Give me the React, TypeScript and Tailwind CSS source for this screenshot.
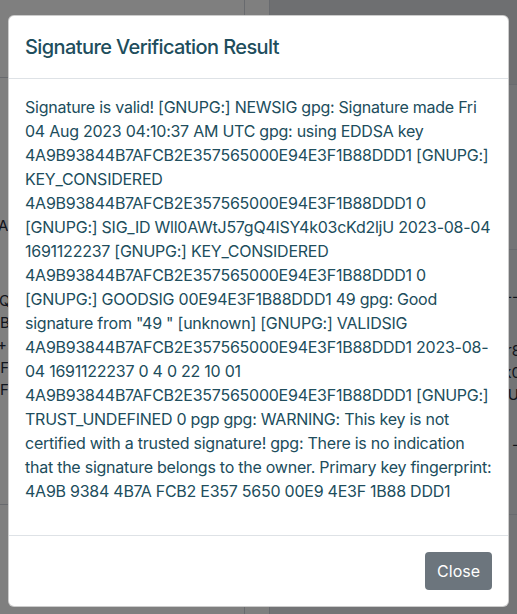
import React from "react";

const lines = [
  "Signature is valid! [GNUPG:] NEWSIG gpg: Signature made Fri",
  "04 Aug 2023 04:10:37 AM UTC gpg: using EDDSA key",
  "4A9B93844B7AFCB2E357565000E94E3F1B88DDD1 [GNUPG:]",
  "KEY_CONSIDERED",
  "4A9B93844B7AFCB2E357565000E94E3F1B88DDD1 0",
  "[GNUPG:] SIG_ID Wll0AWtJ57gQ4ISY4k03cKd2ljU 2023-08-04",
  "1691122237 [GNUPG:] KEY_CONSIDERED",
  "4A9B93844B7AFCB2E357565000E94E3F1B88DDD1 0",
  "[GNUPG:] GOODSIG 00E94E3F1B88DDD1 49 gpg: Good",
  'signature from "49 " [unknown] [GNUPG:] VALIDSIG',
  "4A9B93844B7AFCB2E357565000E94E3F1B88DDD1 2023-08-",
  "04 1691122237 0 4 0 22 10 01",
  "4A9B93844B7AFCB2E357565000E94E3F1B88DDD1 [GNUPG:]",
  "TRUST_UNDEFINED 0 pgp gpg: WARNING: This key is not",
  "certified with a trusted signature! gpg: There is no indication",
  "that the signature belongs to the owner. Primary key fingerprint:",
  "4A9B 9384 4B7A FCB2 E357 5650 00E9 4E3F 1B88 DDD1",
];

function BackgroundPage() {
  return (
    <div className="flex h-full w-full text-[15px] text-gray-800">
      <div className="flex w-[270px] border-r border-gray-300 bg-white">
        <div className="flex w-[245px] flex-col border-r border-gray-300">
          <div className="h-[78px] border-b border-gray-300" />
          <div className="flex flex-1 flex-col">
            <div className="h-[137px]" />
            <div className="-ml-[2px] leading-[22px]">A</div>
            <div className="h-[53px]" />
            <div className="-ml-[1px] leading-[22px]">Q</div>
            <div className="leading-[22px]">B</div>
            <div className="-ml-[3px] leading-[23px]">+5</div>
            <div className="-ml-[4px] leading-[22px]">:F</div>
            <div className="leading-[22px]">F</div>
          </div>
          <div className="h-[110px] border-t border-gray-300" />
        </div>
      </div>
      <div className="flex flex-1 flex-col bg-[#e6e8ec]">
        <div className="h-[85px] border-b border-gray-300 bg-[#dcdee3]" />
        <div className="h-[165px] border-b border-gray-300" />
        <div className="flex flex-1 flex-col items-end">
          <div className="h-[36px]" />
          <div className="-mr-[2px] leading-[22px]">--</div>
          <div className="h-[32px]" />
          <div className="-mr-[4px] leading-[22px]">r8</div>
          <div className="-mr-[4px] leading-[22px]">k0</div>
          <div className="-mr-[2px] leading-[22px]">U</div>
          <div className="h-[28px]" />
          <div className="-mr-[2px] leading-[22px]">-</div>
        </div>
        <div className="h-[100px] border-t border-gray-300" />
      </div>
    </div>
  );
}

export default function App() {
  return (
    <div className="relative h-[614px] w-[517px] overflow-hidden font-['Inter','Liberation_Sans',sans-serif]">
      <BackgroundPage />
      <div className="absolute inset-0 bg-black/50" />
      <div className="absolute left-[8px] right-[8px] top-[15px] flex flex-col rounded-[6px] border border-black/20 bg-white text-[#204d5c]">
        <div className="flex items-center border-b border-[#dee2e6] p-4">
          <h5 className="text-[20px] font-medium leading-[30px] tracking-[-0.6px]">
            Signature Verification Result
          </h5>
        </div>
        <div className="p-4">
          <p className="mb-4 text-[16px] leading-[24px] tracking-[-0.25px]">
            {lines.map((l, i) => (
              <span key={i} className="block whitespace-nowrap">
                {l}
              </span>
            ))}
          </p>
        </div>
        <div className="flex justify-end border-t border-[#dee2e6] p-3">
          <button className="m-1 h-[38px] rounded-[4px] bg-[#6c757d] px-3 text-[16px] leading-[24px] text-white">
            Close
          </button>
        </div>
      </div>
    </div>
  );
}
